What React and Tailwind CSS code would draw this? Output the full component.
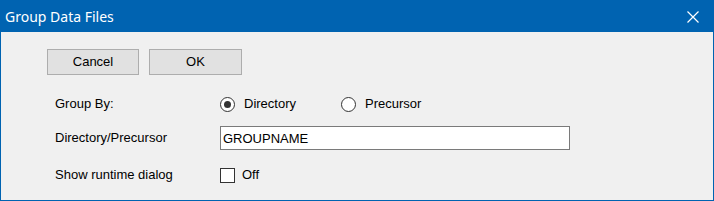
import React, { useState } from 'react';

function Radio({ checked, label, onClick }) {
  return (
    <button type="button" onClick={onClick} className="flex items-center gap-[9px] text-left">
      <span className="flex h-[15px] w-[15px] items-center justify-center rounded-full border border-[#333333] bg-white">
        {checked && <span className="h-[7px] w-[7px] rounded-full bg-[#333333]" />}
      </span>
      <span>{label}</span>
    </button>
  );
}

export default function App() {
  const [groupBy, setGroupBy] = useState('directory');
  const [name, setName] = useState('GROUPNAME');
  const [showDialog, setShowDialog] = useState(false);

  return (
    <div className="flex h-[201px] w-[714px] flex-col border border-[#0063b1] bg-[#f0f0f0] font-['Liberation_Sans',Arial,sans-serif] text-[13px] text-black">
      {/* Title bar */}
      <div className="flex h-[31px] shrink-0 items-center justify-between bg-[#0063b1] pl-[4px] pr-[10px] text-white">
        <span className="font-['Noto_Sans',sans-serif] text-[14px] leading-none">Group Data Files</span>
        <svg width="12" height="12" viewBox="0 0 12 12" className="mr-[4px]">
          <path d="M0.5 0.5L11.5 11.5M11.5 0.5L0.5 11.5" stroke="white" strokeWidth="1.2" />
        </svg>
      </div>

      {/* Buttons */}
      <div className="ml-[46px] mt-[17px] flex gap-[10px]">
        <button type="button" className="h-[26px] w-[92px] border border-[#adadad] bg-[#e1e1e1]">Cancel</button>
        <button type="button" className="h-[26px] w-[93px] border border-[#adadad] bg-[#e1e1e1]">OK</button>
      </div>

      {/* Fields */}
      <div className="ml-[54px] mt-[17px] grid grid-cols-[165px_1fr] items-center gap-y-[10px]">
        <span className="h-[24px] leading-[24px]">Group By:</span>
        <div className="flex h-[24px] items-center gap-[45px]">
          <Radio checked={groupBy === 'directory'} label="Directory" onClick={() => setGroupBy('directory')} />
          <Radio checked={groupBy === 'precursor'} label="Precursor" onClick={() => setGroupBy('precursor')} />
        </div>

        <span>Directory/Precursor</span>
        <input
          value={name}
          onChange={(e) => setName(e.target.value)}
          className="h-[24px] w-[350px] border border-[#7a7a7a] bg-white px-[2px] outline-none"
        />

        <span className="mt-[3px]">Show runtime dialog</span>
        <label className="mt-[3px] flex h-[24px] cursor-pointer items-center gap-[7px]">
          <input
            type="checkbox"
            checked={showDialog}
            onChange={() => setShowDialog(!showDialog)}
            className="h-[15px] w-[15px] appearance-none border border-[#333333] bg-white checked:bg-[#333333]"
          />
          <span>{showDialog ? 'On' : 'Off'}</span>
        </label>
      </div>
    </div>
  );
}
